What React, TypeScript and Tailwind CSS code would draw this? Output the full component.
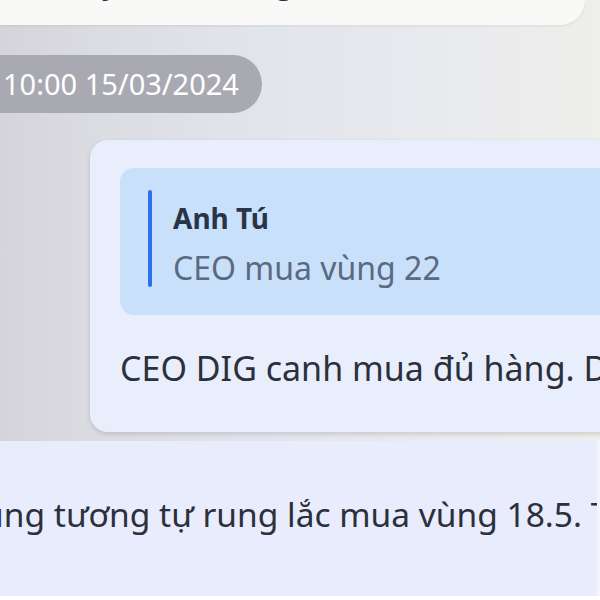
import React from "react";

export default function App() {
  return (
    <div className="w-[600px] h-[600px] overflow-hidden bg-white flex flex-col font-['Noto_Sans','Open_Sans',sans-serif]">
      <div className="h-[441px] shrink-0 flex flex-col bg-[linear-gradient(90deg,#d4d4da_0%,#dcdde3_18%,#e3e5ed_45%,#e9eaee_72%,#eeeeeb_100%)]">
        <div className="h-[25px] w-[585px] shrink-0 bg-[#f9f9f8] rounded-br-[30px] shadow-[0_1px_3px_rgba(0,0,0,0.08)] overflow-hidden">
          <div className="-mt-[44px] pl-[58px] text-[34px] leading-[48px] text-[#2b303b] whitespace-nowrap">
            Hãy canh vùng
          </div>
        </div>
        <div className="mt-[30px] self-start -ml-[30px] pl-[33px] pr-[23px] h-[58px] rounded-full bg-[#a9aab1] text-white text-[29px] leading-[58px] whitespace-nowrap">
          10:00 15/03/2024
        </div>
        <div className="mt-[27px] ml-[90px] w-[560px] h-[292px] shrink-0 rounded-[18px] bg-[#e9eefc] shadow-[0_2px_5px_rgba(0,0,0,0.14)] pl-[30px] pt-[28px] overflow-hidden">
          <div className="h-[147px] rounded-[14px] bg-[#c9e0fb] flex items-start pl-[28px] pt-[22px]">
            <div className="w-[4px] h-[97px] bg-[#2e6ff0] rounded-full shrink-0" />
            <div className="pl-[21px] pt-[8px] whitespace-nowrap">
              <div className="text-[28px] leading-[40px] font-bold text-[#293547]">Anh Tú</div>
              <div className="mt-[8px] text-[32px] leading-[44px] text-[#5b6a80]">CEO mua vùng 22</div>
            </div>
          </div>
          <div className="mt-[29px] text-[34px] leading-[48px] text-[#2b303b] whitespace-nowrap">
            CEO DIG canh mua đủ hàng. Dự kiến
          </div>
        </div>
      </div>
      <div className="h-[155px] shrink-0 bg-[#e8ecfc] overflow-hidden border-r-[3px] border-[#f4f6fe]">
        <div className="pt-[49px] -ml-[33px] text-[33.5px] leading-[48px] text-[#2b303b] whitespace-nowrap">
          cũng tương tự rung lắc mua vùng 18.5. Tuy nhiên
        </div>
      </div>
    </div>
  );
}
